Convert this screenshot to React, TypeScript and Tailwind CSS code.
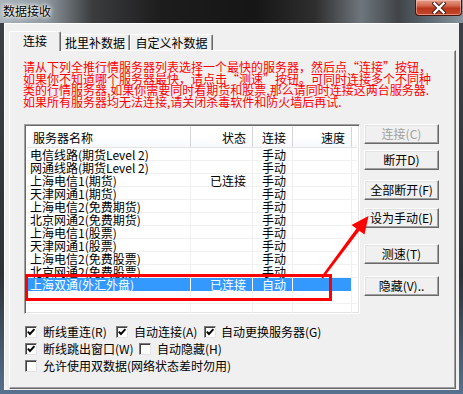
import React from "react";

const FONT = "font-['Noto_Sans_CJK_SC','Noto_Sans',sans-serif]";

function Check({ checked }: { checked: boolean }) {
  return (
    <span className="w-[12px] h-[12px] shrink-0 bg-white border-t border-l border-[#7a7a7a] border-r border-b border-r-[#e3e3e3] border-b-[#e3e3e3] shadow-[inset_1px_1px_0_#404040] flex items-center justify-center">
      {checked && (
        <svg width="10" height="10" viewBox="0 0 10 10">
          <path d="M1.8 4.6 L4 7 L8.4 2.2" fill="none" stroke="#000" strokeWidth="1.9" />
        </svg>
      )}
    </span>
  );
}

function Btn({ label, disabled, mt }: { label: string; disabled?: boolean; mt: string }) {
  return (
    <div
      className={`${mt} w-[75px] h-[20px] flex items-center justify-center bg-[#f0f0f0] border-t border-l border-t-white border-l-white border-r border-b border-r-[#696969] border-b-[#696969] shadow-[inset_-1px_-1px_0_#a0a0a0,inset_1px_1px_0_#e3e3e3] text-[12px] leading-[12px] whitespace-nowrap ${
        disabled ? "text-[#a0a0a0]" : "text-black"
      }`}
    >
      {label}
    </div>
  );
}

const rows: [string, string, string][] = [
  ["电信线路(期货Level 2)", "", "手动"],
  ["网通线路(期货Level 2)", "", "手动"],
  ["上海电信1(期货)", "已连接", "手动"],
  ["天津网通1(期货)", "", "手动"],
  ["上海电信2(免费期货)", "", "手动"],
  ["北京网通2(免费期货)", "", "手动"],
  ["上海电信1(股票)", "", "手动"],
  ["天津网通1(股票)", "", "手动"],
  ["上海电信2(免费股票)", "", "手动"],
  ["北京网通2(免费股票)", "", "手动"],
];

function Row({ r, selected }: { r: [string, string, string]; selected?: boolean }) {
  const line = selected ? "border-white" : "border-[#f0f0f0]";
  return (
    <div className={`flex h-[13px] text-[12px] leading-[13px] ${selected ? "" : "border-b border-[#f0f0f0]"}`}>
      <div className={`w-[164px] h-full pl-[3px] whitespace-nowrap overflow-visible border-r ${line} ${selected ? "bg-[#3399ff] text-white" : "text-black"}`}>{r[0]}</div>
      <div className={`w-[62px] h-full pr-[6px] text-right whitespace-nowrap border-r ${line} ${selected ? "bg-[#3399ff] text-white" : "text-black"}`}>{r[1]}</div>
      <div className={`w-[40px] h-full pl-[9px] whitespace-nowrap border-r ${line} ${selected ? "bg-[#3399ff] text-white" : "text-black"}`}>{r[2]}</div>
      <div className={`w-[59px] h-full border-r border-[#f0f0f0] ${selected ? "bg-[#3399ff]" : ""}`}></div>
      <div className="flex-1 h-full"></div>
    </div>
  );
}

export default function App() {
  return (
    <div className={`w-[463px] h-[394px] relative overflow-hidden flex flex-col bg-[linear-gradient(180deg,#3d4248_0%,#2e3338_70%,#56708f_100%)] ${FONT}`}>
      {/* Title bar */}
      <div className="h-[23px] shrink-0 flex items-start bg-[linear-gradient(90deg,#aab4bc_0%,#8f989f_10%,#3a3c3e_20%,#1c1c1c_35%,#161616_55%,#2e2e2e_68%,#6e767d_78%,#404448_86%,#5f6a73_93%,#8a969f_100%)]">
        <div className="pl-[3px] pt-[4px] text-[12px] leading-[13px] text-black [text-shadow:0_0_4px_#fff,0_0_6px_#fff,0_0_2px_#fff]">
          数据接收
        </div>
        <div className="ml-auto mr-[1px] w-[47px] h-[16px] rounded-b-[4px] border border-t-0 border-[#4a1208] bg-[linear-gradient(180deg,#e4a08e_0%,#d0644a_40%,#b8361c_55%,#c4462a_100%)] shadow-[inset_0_0_0_1px_rgba(255,210,200,0.5)] flex items-center justify-center">
          <svg width="14" height="12" viewBox="0 0 14 12">
            <path d="M2.5 1.5 L11.5 10.5 M11.5 1.5 L2.5 10.5" stroke="#3a1a14" strokeWidth="4.2" strokeLinecap="square" />
            <path d="M2.5 1.5 L11.5 10.5 M11.5 1.5 L2.5 10.5" stroke="#ffffff" strokeWidth="2.4" strokeLinecap="square" />
          </svg>
        </div>
      </div>

      {/* Client area */}
      <div className="flex-1 mx-[4px] mb-[4px] bg-[#f0f0f0] border-t border-l border-white flex flex-col pl-[4px] pr-[3px] pb-[1px]">
        {/* Tabs */}
        <div className="mt-[7px] h-[19px] flex items-end relative z-10">
          <div className="w-[52px] h-[20px] mb-[-1px] bg-[#f0f0f0] border-t border-l border-white border-r border-r-[#696969] rounded-t-[2px] shadow-[inset_-1px_0_0_#a0a0a0] flex items-start justify-center pt-[2px] text-[12px] leading-[14px] text-black">
            连接
          </div>
          <div className="w-[69px] h-[16px] bg-[#f0f0f0] border-t border-white border-r border-r-[#696969] rounded-t-[2px] shadow-[inset_-1px_0_0_#a0a0a0] flex items-start justify-center pt-[1px] text-[12px] leading-[14px] text-black">
            批里补数据
          </div>
          <div className="w-[83px] h-[16px] bg-[#f0f0f0] border-t border-l border-white border-r border-r-[#696969] rounded-t-[2px] shadow-[inset_-1px_0_0_#a0a0a0] flex items-start justify-center pt-[1px] text-[12px] leading-[14px] text-black">
            自定义补数据
          </div>
        </div>

        {/* Panel */}
        <div className="flex-1 border-t border-l border-white border-r border-b border-r-[#696969] border-b-[#696969] shadow-[inset_-1px_-1px_0_#a0a0a0] flex flex-col">
          <div className="ml-[13px] mt-[10px] text-[12px] leading-[11.7px] text-[#ff0000] whitespace-nowrap">
            <div>请从下列全推行情服务器列表选择一个最快的服务器，然后点“连接”按钮，</div>
            <div>如果你不知道哪个服务器最快，请点击“测速”按钮。可同时连接多个不同种</div>
            <div>类的行情服务器,如果你需要同时看期货和股票,那么请同时连接这两台服务器.</div>
            <div>如果所有服务器均无法连接,请关闭杀毒软件和防火墙后再试.</div>
          </div>

          <div className="flex mt-[16px] ml-[14px]">
            {/* List */}
            <div className="w-[336px] h-[190px] bg-white border-t border-l border-[#a0a0a0] border-r border-b border-r-white border-b-white shadow-[inset_1px_1px_0_#696969,inset_-1px_-1px_0_#e3e3e3] p-[2px] overflow-hidden">
              <div className="flex h-[21px] border-b border-[#e5e5e5] text-[12px] leading-[21px] text-black bg-[linear-gradient(180deg,#ffffff_0%,#ffffff_50%,#f7f8fa_100%)]">
                <div className="w-[164px] pl-[6px] border-r border-[#d5d5d5]">服务器名称</div>
                <div className="w-[62px] pr-[6px] text-right border-r border-[#d5d5d5]">状态</div>
                <div className="w-[40px] pl-[9px] border-r border-[#d5d5d5]">连接</div>
                <div className="w-[59px] pr-[6px] text-right border-r border-[#d5d5d5]">速度</div>
                <div className="flex-1"></div>
              </div>
              {rows.map((r, i) => (
                <Row key={i} r={r} />
              ))}
              <Row r={["上海双通(外汇外盘)", "已连接", "自动"]} selected />
              <Row r={["", "", ""]} />
              <Row r={["", "", ""]} />
            </div>

            {/* Buttons */}
            <div className="ml-[4px] flex flex-col">
              <Btn label="连接(C)" disabled mt="mt-0" />
              <Btn label="断开D)" mt="mt-[6px]" />
              <Btn label="全部断开(F)" mt="mt-[10px]" />
              <Btn label="设为手动(E)" mt="mt-[8px]" />
              <Btn label="测速(T)" mt="mt-[16px]" />
              <Btn label="隐藏(V).." mt="mt-[12px]" />
            </div>
          </div>

          {/* Checkboxes */}
          <div className="ml-[15px] mt-[12px] flex flex-col gap-[5px] text-[12px] leading-[13px] text-black">
            <div className="flex items-center h-[12px]">
              <div className="w-[91px] flex items-center gap-[6px]"><Check checked /><span className="whitespace-nowrap">断线重连(R)</span></div>
              <div className="w-[88px] flex items-center gap-[6px]"><Check checked /><span className="whitespace-nowrap">自动连接(A)</span></div>
              <div className="flex items-center gap-[5px]"><Check checked /><span className="whitespace-nowrap">自动更换服务器(G)</span></div>
            </div>
            <div className="flex items-center h-[12px]">
              <div className="w-[114px] flex items-center gap-[6px]"><Check checked /><span className="whitespace-nowrap">断线跳出窗口(W)</span></div>
              <div className="flex items-center gap-[6px]"><Check checked={false} /><span className="whitespace-nowrap">自动隐藏(H)</span></div>
            </div>
            <div className="flex items-center h-[12px]">
              <div className="flex items-center gap-[6px]"><Check checked={false} /><span className="whitespace-nowrap">允许使用双数据(网络状态差时勿用)</span></div>
            </div>
          </div>
        </div>
      </div>

      {/* Red highlight rectangle (annotation overlay) */}
      <div className="absolute left-[25px] top-[274px] w-[307px] h-[27px] border-[3px] border-[#ff0000] pointer-events-none"></div>

      {/* Red arrow (annotation overlay) */}
      <svg className="absolute left-0 top-0 pointer-events-none" width="463" height="394" viewBox="0 0 463 394">
        <polygon points="321,277 323,278.5 359.5,230.5 356.5,228.5" fill="#ff0000" />
        <polygon points="368.5,216 351.5,225 364.5,234.5" fill="#ff0000" />
      </svg>
    </div>
  );
}
